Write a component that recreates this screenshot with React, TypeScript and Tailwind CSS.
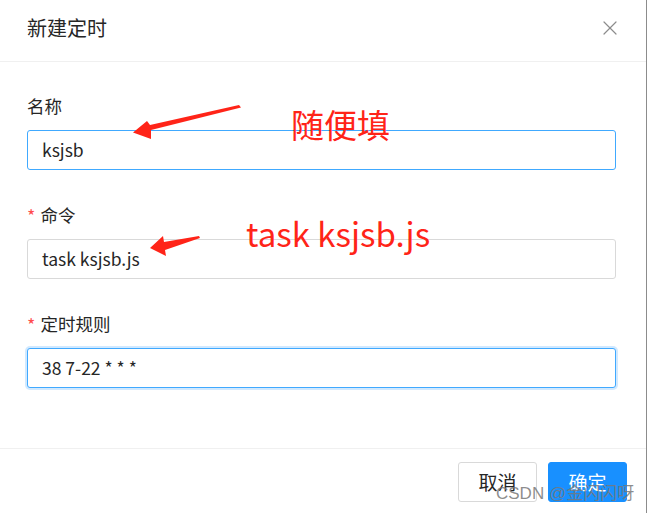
import { X } from "lucide-react";

const font = { fontFamily: '"Noto Sans CJK SC", "Noto Sans", sans-serif' };

function Field({
  label,
  value,
  required,
  state,
}: {
  label: string;
  value: string;
  required?: boolean;
  state: "hover" | "idle" | "focus";
}) {
  const border =
    state === "idle"
      ? "border-[#d9d9d9]"
      : state === "hover"
        ? "border-[#40a9ff]"
        : "border-[#40a9ff] shadow-[0_0_0_2px_rgba(24,144,255,0.2)]";
  return (
    <div className="flex flex-col">
      <div className="flex h-[28px] items-center text-[17.5px] text-[#262626]">
        {required && <span className="mr-[5px] text-[18px] text-[#ff4d4f]">*</span>}
        {label}
      </div>
      <div
        className={`mt-[10px] flex h-[40px] items-center rounded-[3px] border bg-white px-[14px] text-[17.5px] text-[#262626] ${border}`}
      >
        {value}
      </div>
    </div>
  );
}

export default function App() {
  return (
    <div className="relative h-[513px] w-[648px] overflow-hidden bg-white" style={font}>
      <div className="flex h-full w-[647px] flex-col border-r border-[#8c8c8c]">
        <div className="flex h-[62px] shrink-0 items-center justify-between border-b border-[#f0f0f0] pb-[5px] pl-[27px] pr-[24px]">
          <span className="text-[20px] text-[#262626]">新建定时</span>
          <X size={24} strokeWidth={1.2} className="text-[#8c8c8c]" />
        </div>
        <div className="flex flex-1 flex-col gap-[31px] pl-[27px] pr-[30px] pt-[30px]">
          <Field label="名称" value="ksjsb" state="hover" />
          <Field label="命令" value="task ksjsb.js" required state="idle" />
          <Field label="定时规则" value="38 7-22 * * *" required state="focus" />
        </div>
        <div className="flex h-[65px] shrink-0 justify-end gap-[11px] border-t border-[#f0f0f0] pr-[19px] pt-[13px]">
          <button className="h-[40px] w-[79px] rounded-[3px] border border-[#d9d9d9] bg-white text-[19px] text-[#262626]">
            取消
          </button>
          <button className="h-[40px] w-[79px] rounded-[3px] border border-[#1890ff] bg-[#1890ff] text-[19px] text-white">
            确定
          </button>
        </div>
      </div>

      {/* annotations drawn over the screenshot */}
      <svg className="pointer-events-none absolute left-0 top-0" width="648" height="513">
        <polygon
          points="241,107.5 151,130 151,139 133,132.5 147,121 150,125 239,105"
          fill="#ff2418"
        />
        <polygon
          points="200,238 165,250 166,256 150,248 163,236 164,242 199,236"
          fill="#ff2418"
        />
      </svg>
      <div className="absolute left-[291px] top-[104px] text-[33px] leading-[40px] text-[#ff2418]">
        随便填
      </div>
      <div className="absolute left-[246px] top-[213px] text-[33px] leading-[40px] text-[#ff2418]">
        task ksjsb.js
      </div>
      <div
        className="absolute left-[496px] top-[482px] text-[17px] leading-[24px] text-[rgba(120,120,120,0.85)]"
        style={{ fontFamily: '"Liberation Sans", "Noto Sans CJK SC", sans-serif' }}
      >
        CSDN @金闪闪呀
      </div>
    </div>
  );
}
